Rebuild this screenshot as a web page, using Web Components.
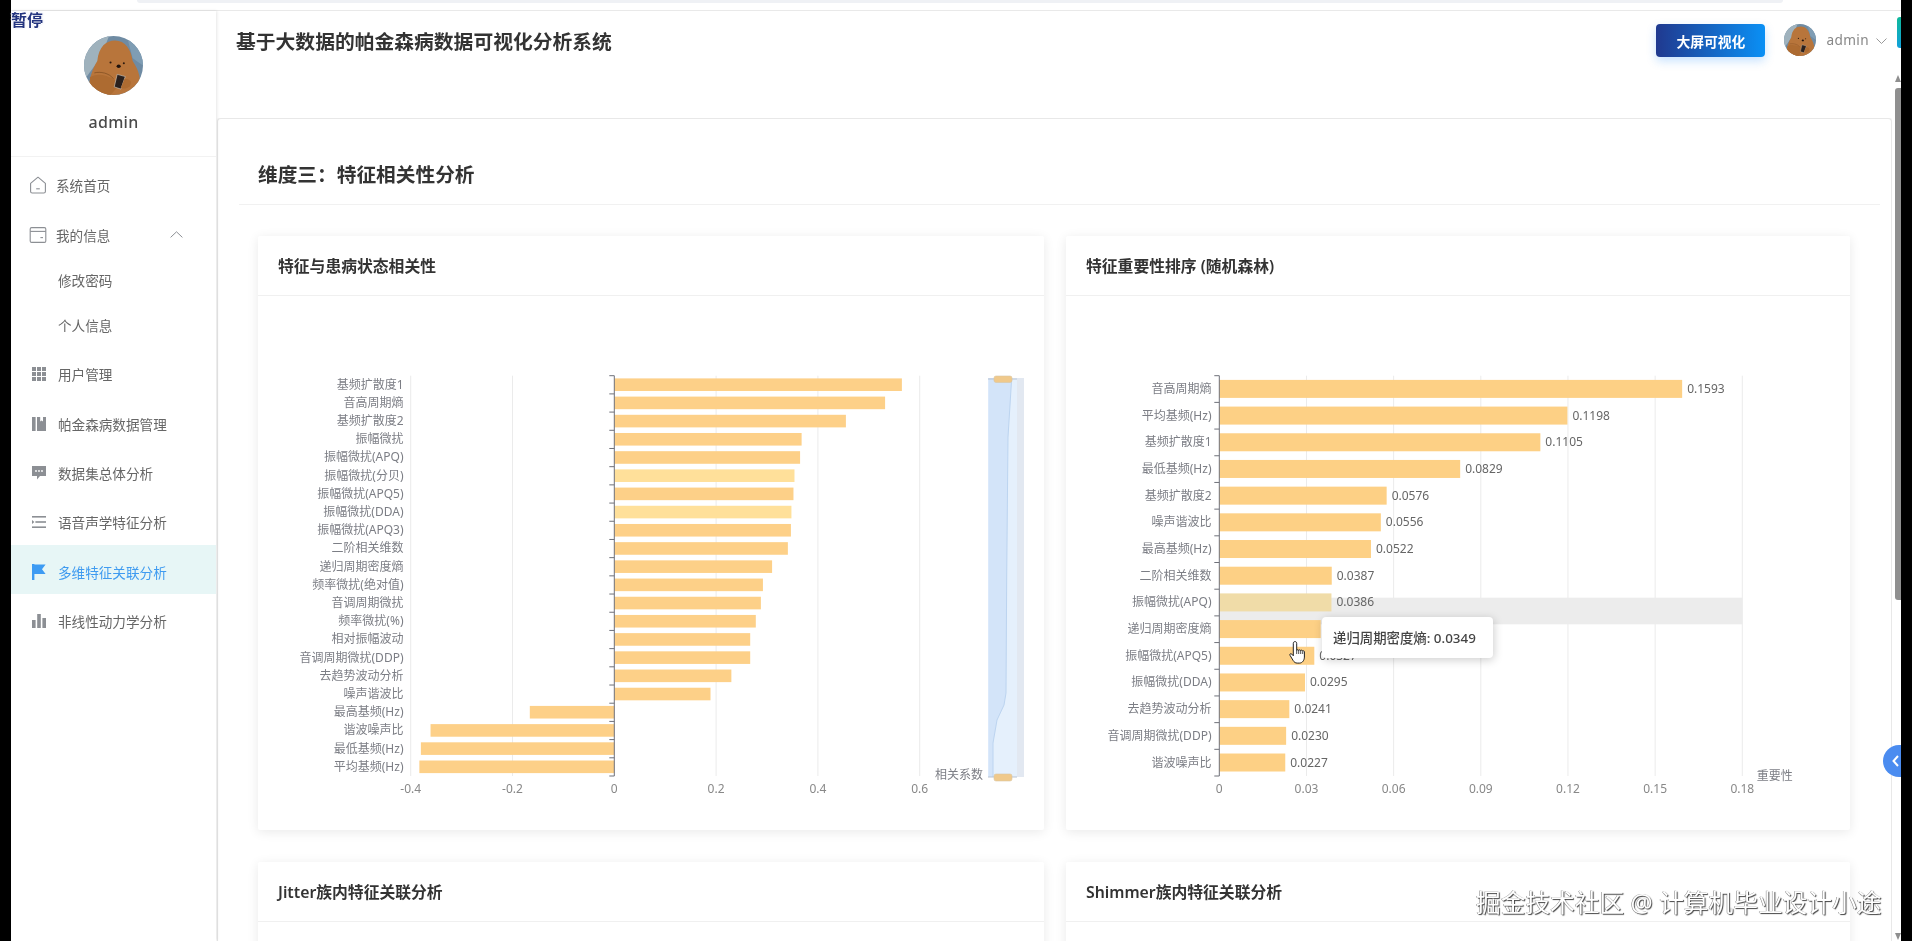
<!DOCTYPE html>
<html lang="zh">
<head>
<meta charset="utf-8">
<title>帕金森病数据可视化分析系统</title>
<style>
html,body{margin:0;padding:0;height:941px;overflow:hidden;background:#000;font-family:"Noto Sans","Noto Sans CJK SC",sans-serif}
</style>
</head>
<body>
<app-shell>
  <side-nav slot="side">
    <nav-item icon="home">系统首页</nav-item>
    <nav-item icon="wallet" chevron>我的信息</nav-item>
    <nav-group>
      <nav-sub>修改密码</nav-sub>
      <nav-sub>个人信息</nav-sub>
    </nav-group>
    <nav-item icon="grid" shift>用户管理</nav-item>
    <nav-item icon="books" shift>帕金森病数据管理</nav-item>
    <nav-item icon="chat" shift>数据集总体分析</nav-item>
    <nav-item icon="list" shift>语音声学特征分析</nav-item>
    <nav-item icon="flag" shift active>多维特征关联分析</nav-item>
    <nav-item icon="bars" shift>非线性动力学分析</nav-item>
  </side-nav>
  <top-header slot="head"></top-header>
  <page-panel slot="main" heading="维度三：特征相关性分析">
    <chart-card heading="特征与患病状态相关性" size="tall"><bar-chart kind="corr"></bar-chart></chart-card>
    <chart-card heading="特征重要性排序 (随机森林)" size="tall">
      <bar-chart kind="imp"></bar-chart>
      <chart-tooltip style="left:256px;top:381px">递归周期密度熵: 0.0349</chart-tooltip>
      <hand-cursor style="left:223px;top:405px"></hand-cursor>
    </chart-card>
    <chart-card heading="Jitter族内特征关联分析"></chart-card>
    <chart-card heading="Shimmer族内特征关联分析"></chart-card>
  </page-panel>
  <scroll-rail slot="rail"></scroll-rail>
</app-shell>
<video-overlay></video-overlay>

<script>
const BEAR = `
<svg viewBox="0 0 80 80" width="100%" height="100%" style="display:block;border-radius:50%">
  <rect width="80" height="80" fill="#6f8ba3"/>
  <path d="M0 0H34L22 30 0 60Z" fill="#9fb2bd"/>
  <path d="M58 0H80V40L66 30Z" fill="#7f9db4"/>
  <path d="M8 80C4 62 12 44 18 34 20 14 30 6 42 6 56 6 64 18 66 34 74 46 80 60 72 80Z" fill="#b8753b"/>
  <path d="M8 56C16 50 28 52 40 58L48 66 36 80H10Z" fill="#ad6b31"/>
  <path d="M14 50C22 48 34 50 40 58" fill="none" stroke="#7a4a20" stroke-width=".9"/>
  <circle cx="36" cy="36" r="1.4" fill="#2c1a10"/><circle cx="54" cy="37" r="1.4" fill="#2c1a10"/>
  <ellipse cx="47" cy="41" rx="2.800" ry="2.300" fill="#1f120c"/>
  <path d="M45 52L56 55 50 72 41 69Z" fill="#2a201d" stroke="#d9d2c8" stroke-width=".8"/>
  <path d="M55 58C62 58 66 62 62 68 58 72 52 72 50 70Z" fill="#ad6b31"/>
</svg>`;

const ICONS = {
 home:`<svg viewBox="0 0 18 18" width="18" height="18" fill="none" stroke="#8c8f94" stroke-width="1.1"><path d="M1.6 7.4 9 1.2l7.4 6.2v8a1.6 1.6 0 0 1-1.6 1.6H3.2a1.6 1.6 0 0 1-1.6-1.6z" stroke-linejoin="round"/><path d="M7.2 12.8h3.6"/></svg>`,
 wallet:`<svg viewBox="0 0 18 18" width="18" height="18" fill="none" stroke="#8c8f94" stroke-width="1.1"><rect x="1.2" y="1.6" width="15.6" height="14.8" rx="1.4"/><path d="M1.2 5.4h15.6"/><path d="M11.4 11.6h2.6"/></svg>`,
 grid:`<svg viewBox="0 0 14 14" width="14" height="14" fill="#8c8f94"><rect x="0" y="0" width="4" height="4"/><rect x="5" y="0" width="4" height="4"/><rect x="10" y="0" width="4" height="4"/><rect x="0" y="5" width="4" height="4"/><rect x="5" y="5" width="4" height="4"/><rect x="10" y="5" width="4" height="4"/><rect x="0" y="10" width="4" height="4"/><rect x="5" y="10" width="4" height="4"/><rect x="10" y="10" width="4" height="4"/></svg>`,
 books:`<svg viewBox="0 0 14 14" width="14" height="14" fill="#8c8f94"><rect x="0" y="0" width="3.6" height="14"/><path d="M5 0h3.2v4.5l1.4-1 1.4 1V0H14v14H5z"/></svg>`,
 chat:`<svg viewBox="0 0 14 14" width="14" height="14"><path d="M0 0h14v10H8l-3 3.6V10H0z" fill="#8c8f94"/><circle cx="4" cy="5" r=".9" fill="#fff"/><circle cx="7" cy="5" r=".9" fill="#fff"/><circle cx="10" cy="5" r=".9" fill="#fff"/></svg>`,
 list:`<svg viewBox="0 0 14 14" width="14" height="14" fill="#8c8f94"><rect x="0" y="1" width="14" height="1.6"/><rect x="3.4" y="6.2" width="10.6" height="1.6"/><path d="M0 5l2.4 2L0 9z"/><rect x="0" y="11.4" width="14" height="1.6"/></svg>`,
 flag:`<svg viewBox="0 0 14 16" width="14" height="16" fill="#3d9bf3"><rect x="0" y="0" width="2.4" height="16"/><path d="M2 .6h11.6L10 5.2l3.6 4.8H2z"/></svg>`,
 bars:`<svg viewBox="0 0 14 14" width="14" height="14" fill="#8c8f94"><rect x="0" y="6" width="3.6" height="8"/><rect x="5.2" y="0" width="3.6" height="14"/><rect x="10.4" y="4" width="3.6" height="10"/></svg>`
};

function define(name, html, onBuild){
  customElements.define(name, class extends HTMLElement{
    constructor(){
      super();
      const r = this.attachShadow({mode:'open'});
      r.innerHTML = typeof html === 'function' ? html(this) : html;
    }
    connectedCallback(){ if(onBuild) onBuild(this); }
  });
}

define('app-shell', `
<style>
:host{display:grid;grid-template-columns:11px 205px 1fr 9px 11px;grid-template-rows:11px 107px 823px;width:1912px;height:941px;background:#fff;overflow:hidden;filter:blur(.45px)}
.bl{grid-column:1;grid-row:1/4;background:#000}
.br{grid-column:5;grid-row:1/4;background:#000}
.top{grid-column:2/5;grid-row:1;background:#fff;border-bottom:1px solid #e9e9e9;position:relative;box-sizing:border-box}
.top i{display:block;height:3px;margin:0 118px 0 126px;background:#eff1f5;border-radius:0 0 6px 6px}
.side{grid-column:2;grid-row:2/4;min-height:0;box-shadow:1px 0 3px rgba(0,0,0,.1);z-index:1;background:#fff}
.head{grid-column:3/5;grid-row:2;min-width:0}
.main{grid-column:3;grid-row:3;min-width:0;overflow:hidden;padding-left:1px}
.rail{grid-column:4;grid-row:2/4}
</style>
<div class="bl"></div><div class="top"><i></i></div><div class="br"></div>
<div class="side"><slot name="side"></slot></div>
<div class="head"><slot name="head"></slot></div>
<div class="main"><slot name="main"></slot></div>
<div class="rail"><slot name="rail"></slot></div>`);

define('side-nav', `
<style>
:host{display:block;height:100%;color:#666;font-size:13.6px}
.user{height:146px;box-sizing:border-box;padding-top:25px;border-bottom:1px solid #f2f2f2;display:flex;flex-direction:column;align-items:center}
.ava{width:59px;height:59px}
.name{margin-top:15px;font-size:16px;line-height:24px;font-weight:500;color:#4a4a4a;letter-spacing:.3px}
nav{padding-top:3.500px}
</style>
<div class="user"><div class="ava">${BEAR}</div><div class="name">admin</div></div>
<nav><slot></slot></nav>`);

define('nav-item', el=>`
<style>
:host{display:flex;align-items:center;height:49.4px;box-sizing:border-box;position:relative;color:#666;font-size:13.6px;white-space:nowrap}
:host([shift]){padding-top:5px}
:host([active]){background:#e7f6f6;color:#3f9bf0}
.ic{width:46px;flex:none;display:flex;justify-content:flex-start;padding-left:${['home','wallet'].includes(el.getAttribute('icon'))?18:21}px;box-sizing:border-box}
.t{margin-left:${['home','wallet'].includes(el.getAttribute('icon'))?-1:1}px}
.c{position:absolute;left:159px;top:21px}
svg{display:block}
</style>
<span class="ic">${ICONS[el.getAttribute('icon')]}</span><span class="t"><slot></slot></span>
${el.hasAttribute('chevron')?`<svg class="c" width="13" height="7" viewBox="0 0 13 7" fill="none" stroke="#8c8f94" stroke-width="1"><path d="M.6 6.4 6.5.8l5.9 5.6"/></svg>`:''}`);

define('nav-group', `<style>:host{display:block;margin-top:-1.300px}</style><slot></slot>`);
define('nav-sub', `<style>:host{display:flex;align-items:center;height:44.5px;padding-left:47px;color:#666;font-size:13.6px}</style><slot></slot>`);

define('top-header', `
<style>
:host{display:flex;align-items:flex-start;height:107px;box-sizing:border-box;padding:17px 0 0 20px}
h1{margin:0;font-size:19.8px;line-height:27px;font-weight:600;color:#333;flex:1}
.btn{margin-top:-4px;width:109px;height:33px;border-radius:4px;background:linear-gradient(90deg,#20398f,#0a90f5);box-shadow:0 4px 10px rgba(30,140,250,.25);color:#fff;font-size:13.8px;font-weight:700;display:flex;align-items:center;justify-content:center}
.ava{width:32px;height:32px;margin:-4px 0 0 19px}
.n{margin:-4px 0 0 10px;line-height:32px;font-size:13.6px;color:#888;letter-spacing:.4px}
.c{margin:10px 14px 0 7px}
</style>
<h1>基于大数据的帕金森病数据可视化分析系统</h1>
<div class="btn">大屏可视化</div>
<div class="ava">${BEAR}</div>
<div class="n">admin</div>
<svg class="c" width="11" height="6" viewBox="0 0 11 6" fill="none" stroke="#999" stroke-width="1"><path d="M.5.5l5 5 5-5"/></svg>`);

define('page-panel', el=>`
<style>
:host{display:block;height:823px;width:1675px;box-sizing:border-box;border:1px solid #e8e8e8;border-bottom:0;border-radius:4px 4px 0 0;background:#fff;padding:26px 0 0 21px;box-shadow:0 -1px 2px rgba(0,0,0,.06)}
h2{margin:0 11px 0 0;height:60px;box-sizing:border-box;padding-left:19px;font-size:19.7px;line-height:59px;font-weight:600;color:#333;border-bottom:1px solid #f1f1f1}
.g{display:grid;grid-template-columns:786px 784px;column-gap:22px;row-gap:32px;margin:31px 0 0 19px}
</style>
<h2>${el.getAttribute('heading')}</h2>
<div class="g"><slot></slot></div>`);

define('chart-card', el=>`
<style>
:host{display:block;position:relative;background:#fff;border-radius:2px;box-shadow:0 2px 12px rgba(0,0,0,.09);height:${el.getAttribute('size')==='tall'?'594px':'300px'}}
.h{height:60px;box-sizing:border-box;padding-left:20px;font-size:15.8px;line-height:61px;font-weight:600;color:#333;border-bottom:1px solid #f0f0f0}
</style>
<div class="h">${el.getAttribute('heading')}</div><slot></slot>`);

const CORR = [["基频扩散度1",.565],["音高周期熵",.532],["基频扩散度2",.455],["振幅微扰",.368],["振幅微扰(APQ)",.365],["振幅微扰(分贝)",.354,1],["振幅微扰(APQ5)",.352],["振幅微扰(DDA)",.348,1],["振幅微扰(APQ3)",.347],["二阶相关维数",.341],["递归周期密度熵",.310],["频率微扰(绝对值)",.292],["音调周期微扰",.288],["频率微扰(%)",.278],["相对振幅波动",.267],["音调周期微扰(DDP)",.267],["去趋势波动分析",.230],["噪声谐波比",.189],["最高基频(Hz)",-.166],["谐波噪声比",-.361],["最低基频(Hz)",-.380],["平均基频(Hz)",-.383]];
const IMP = [["音高周期熵",.1593],["平均基频(Hz)",.1198],["基频扩散度1",.1105],["最低基频(Hz)",.0829],["基频扩散度2",.0576],["噪声谐波比",.0556],["最高基频(Hz)",.0522],["二阶相关维数",.0387],["振幅微扰(APQ)",.0386],["递归周期密度熵",.0349],["振幅微扰(APQ5)",.0327],["振幅微扰(DDA)",.0295],["去趋势波动分析",.0241],["音调周期微扰(DDP)",.0230],["谐波噪声比",.0227]];
const txt=(x,y,s,a,c)=>`<text x="${x}" y="${y}" text-anchor="${a||'middle'}" fill="${c||'#7c7e85'}" dominant-baseline="central">${s}</text>`;

function corrSvg(){
  const x0=614.3,k=509,top=375.7,bot=776,band=(bot-top)/22;let s='';
  [-.4,-.2,.2,.4,.6].forEach(v=>{const x=x0+v*k;s+=`<line x1="${x}" x2="${x}" y1="${top}" y2="${bot}" stroke="#ebebeb"/>`});
  CORR.forEach((d,i)=>{
    const y=top+band*i,a=x0+d[1]*k;
    s+=`<rect x="${Math.min(a,x0)}" y="${y+2.7}" width="${Math.abs(a-x0)}" height="12.6" fill="${d[2]?'#ffe09a':'#fdd088'}"/>`;
    s+=txt(403.5,y+band/2-.6,d[0],'end');
  });
  s+=`<line x1="${x0}" x2="${x0}" y1="${top}" y2="${bot}" stroke="#6e7079"/>`;
  for(let i=0;i<=22;i++){const y=top+band*i;s+=`<line x1="${x0-5}" x2="${x0}" y1="${y}" y2="${y}" stroke="#6e7079"/>`}
  [[-.4,'-0.4'],[-.2,'-0.2'],[0,'0'],[.2,'0.2'],[.4,'0.4'],[.6,'0.6']].forEach(v=>{s+=txt(x0+v[0]*k,788,v[1],'middle','#888')});
  s+=txt(935,774,'相关系数','start');
  s+=`<rect x="1017" y="378" width="7" height="399" fill="#e2e8f1"/>`;
  s+=`<rect x="988.3" y="378" width="28.7" height="399" fill="#e5f0fc"/>`;
  s+=`<path d="M988.3 378H1011.7L1008 437 1006.7 577 1006 693 1004 705 997 720 993 743V777H988.3Z" fill="#d3e4f9"/>`;
  s+=`<path d="M1011.7 378 1008 437 1006.7 577 1006 693 1004 705 997 720 993 743V777" fill="none" stroke="#bcd4f0"/>`;
  s+=`<path d="M988 379H1017M988 777H1017" stroke="#b9c3d2"/>`;
  s+=`<rect x="994" y="376" width="18" height="6.5" rx="2" fill="#f0c98b" stroke="#d8c6a4" stroke-width=".6"/>`;
  s+=`<rect x="994" y="774" width="18" height="7" rx="2" fill="#f0c98b" stroke="#d8c6a4" stroke-width=".6"/>`;
  return s;
}
function impSvg(){
  const x0=1219.3,k=523/.18,top=375.7,bot=776,band=(bot-top)/15;let s='';
  [.03,.06,.09,.12,.15,.18].forEach(v=>{const x=x0+v*k;s+=`<line x1="${x}" x2="${x}" y1="${top}" y2="${bot}" stroke="#ebebeb"/>`});
  s+=`<rect x="${x0}" y="597.7" width="523" height="26.6" fill="#ececec"/>`;
  IMP.forEach((d,i)=>{
    const y=top+band*i,w=d[1]*k;
    s+=`<rect x="${x0}" y="${y+4.2}" width="${w}" height="18" fill="${i===8?'#f0dca8':'#fdd085'}"/>`;
    s+=txt(1211.5,y+band/2-.6,d[0],'end');
    s+=txt(x0+w+5,y+band/2-.6,d[1].toFixed(4),'start','#666');
  });
  s+=`<line x1="${x0}" x2="${x0}" y1="${top}" y2="${bot}" stroke="#6e7079"/>`;
  for(let i=0;i<=15;i++){const y=top+band*i;s+=`<line x1="${x0-5}" x2="${x0}" y1="${y}" y2="${y}" stroke="#6e7079"/>`}
  [[0,'0'],[.03,'0.03'],[.06,'0.06'],[.09,'0.09'],[.12,'0.12'],[.15,'0.15'],[.18,'0.18']].forEach(v=>{s+=txt(x0+v[0]*k,788,v[1],'middle','#888')});
  s+=txt(1756.7,775,'重要性','start');
  return s;
}
define('bar-chart', el=>{
  const c=el.getAttribute('kind')==='corr';
  const vb=c?'258 296 786 534':'1066 296 784 534';
  return `<style>:host{display:block}svg{display:block;font-size:12px;font-family:"Noto Sans","Noto Sans CJK SC",sans-serif}</style>
  <svg viewBox="${vb}" width="${c?786:784}" height="534">${c?corrSvg():impSvg()}</svg>`;
});

define('chart-tooltip', `
<style>
:host{position:absolute;display:flex;align-items:center;width:171px;height:41px;box-sizing:border-box;padding:0 0 2px 11px;background:#fff;border-radius:4px;box-shadow:1px 2px 10px rgba(0,0,0,.2);font-size:13.4px;color:#444;font-weight:500;white-space:nowrap}
</style><slot></slot>`);

define('hand-cursor', `
<style>:host{position:absolute;display:block;width:18px;height:23px}svg{display:block}</style>
<svg viewBox="0 0 18 23" width="18" height="23" fill="#fff" stroke="#222" stroke-width="1" stroke-linejoin="round"><path d="M6 .6c1 0 1.7.7 1.7 1.7v7.2c0-1 1.9-1.1 2 0 0-.9 1.8-1 2 .2 .1-.8 1.9-.7 2 .4 .1-.5 1.7-.4 1.7.6v5.4c0 3-1.9 6-5 6H8.2c-2 0-3-1-4-2.5L1 14.3c-.7-1.2.8-2.2 1.8-1.2L4.3 14.800V2.300C4.300 1.300 5 .6 6 .6z"/><path d="M7.700 9.500v3.500M9.700 9.500v3.500M11.700 9.700v3.300M13.700 10.300v2.700" fill="none" stroke-width=".8"/></svg>`);

define('scroll-rail', `
<style>
:host{display:flex;flex-direction:column;height:930px;align-items:flex-end;box-sizing:border-box;padding-top:64px}
.up{width:0;height:0;border:3.500px solid transparent;border-top:0;border-bottom:7px solid #8f8f8f}
.th{width:6px;height:512px;margin-top:6px;background:#8f8f8f;border-radius:3px 0 0 3px}
.sp{flex:1}
.dn{width:0;height:0;border:3.500px solid transparent;border-bottom:0;border-top:7px solid #8f8f8f;margin-bottom:1px}
</style>
<div class="up"></div><div class="th"></div><div class="sp"></div><div class="dn"></div>`);

define('video-overlay', `
<style>
:host{position:fixed;left:0;top:0;width:1912px;height:941px;display:block;pointer-events:none;filter:blur(.4px)}
.pause{position:absolute;left:11px;top:10px;font-size:16px;line-height:20px;font-weight:700;color:#23347f;text-shadow:-1px 0 #fff,1px 0 #fff,0 -1px #fff,0 1px #fff,0 0 2px #7f8cc8}
.mark{position:absolute;left:1476px;top:886px;font-size:24.700px;line-height:33px;white-space:nowrap;color:#fff;text-shadow:1px 1px 1px #444,-.5px -.5px .5px #777}
.tab{position:absolute;left:1897px;top:17px;width:4px;height:31px;background:linear-gradient(180deg,#0fb99a,#12a0dc);border-radius:3px 0 0 3px}
.fab{position:absolute;left:1883px;top:745px;width:18px;height:32px;background:#4b8cf0;border-radius:16px 0 0 16px;display:flex;align-items:center;justify-content:flex-end;overflow:hidden}
</style>
<div class="pause">暂停</div>
<div class="tab"></div>
<div class="fab"><svg width="8" height="12" viewBox="0 0 8 12" fill="none" stroke="#fff" stroke-width="2" style="margin-right:1px"><path d="M6 1 1.500 6 6 11"/></svg></div>
<div class="mark">掘金技术社区 @ 计算机毕业设计小途</div>`);
</script>
</body>
</html>
